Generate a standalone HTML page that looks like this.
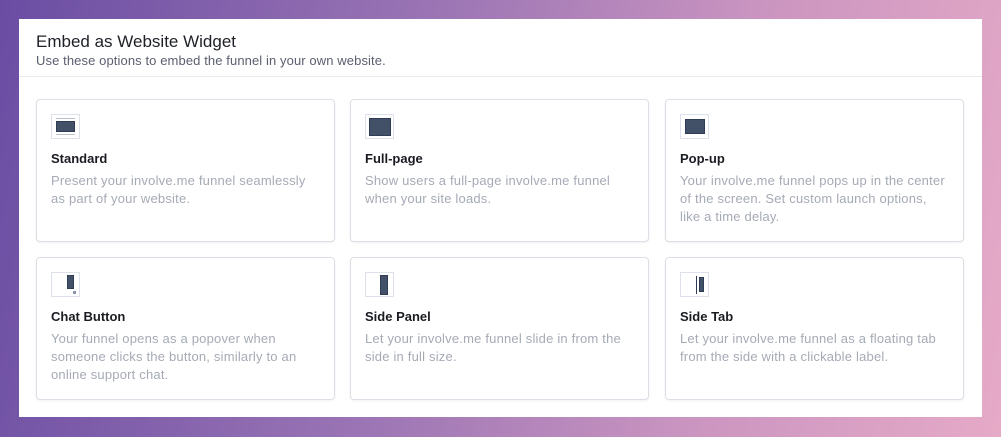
<!DOCTYPE html>
<html><head><meta charset="utf-8"><style>
*{box-sizing:border-box;margin:0;padding:0}
body{width:1001px;height:437px;overflow:hidden;background:linear-gradient(100deg,#6a4da3 0%,#9a74b4 40%,#c994c0 70%,#e6aac7 100%);font-family:"Liberation Sans",sans-serif;position:relative}
.panel{position:absolute;left:19px;top:19px;width:963px;height:398px;background:#fff}
.hd{height:58px;border-bottom:1px solid #e8eaee;padding:13px 0 0 17px}
.hd h1{font-size:17px;font-weight:normal;color:#1f2128;line-height:20px}
.hd p{font-size:13px;color:#5b6070;line-height:18px;letter-spacing:.1px}
.card{position:absolute;width:299px;height:143px;border:1px solid #dcdfe5;border-radius:4px;box-shadow:0 1px 2px rgba(0,0,0,.06);padding:14px 14px 0 14px}
.ic{width:29px;height:25px;border:1px solid #dde2ea;position:relative;margin-bottom:11px}
.ic i{position:absolute;background:#425068;border:1px solid #2e3c55}
.card h3{font-size:13px;font-weight:bold;color:#1a1c22;line-height:18px;margin-bottom:4px}
.card p{font-size:13px;color:#a5aab5;line-height:18px;letter-spacing:.2px}
</style></head><body>
<div class="panel">
<div class="hd"><h1>Embed as Website Widget</h1><p>Use these options to embed the funnel in your own website.</p></div>
</div>
<div class="card" style="left:36px;top:99px"><div class="ic"><i style="left:4px;top:6px;width:19px;height:11px"></i><b style="position:absolute;left:4px;top:3px;width:19px;height:1px;background:#b8c0cc"></b><b style="position:absolute;left:4px;top:19px;width:19px;height:1px;background:#b8c0cc"></b></div><h3>Standard</h3><p>Present your involve.me funnel seamlessly<br>as part of your website.</p></div>
<div class="card" style="left:350px;top:99px"><div class="ic"><i style="left:3px;top:3px;width:22px;height:18px"></i></div><h3>Full-page</h3><p>Show users a full-page involve.me funnel<br>when your site loads.</p></div>
<div class="card" style="left:665px;top:99px"><div class="ic"><i style="left:4px;top:4px;width:20px;height:15px"></i></div><h3>Pop-up</h3><p>Your involve.me funnel pops up in the center<br>of the screen. Set custom launch options,<br>like a time delay.</p></div>
<div class="card" style="left:36px;top:257px"><div class="ic"><i style="left:15px;top:2px;width:7px;height:14px"></i><b style="position:absolute;left:21px;top:18px;width:3px;height:3px;background:#8a95a8"></b></div><h3>Chat Button</h3><p>Your funnel opens as a popover when<br>someone clicks the button, similarly to an<br>online support chat.</p></div>
<div class="card" style="left:350px;top:257px"><div class="ic"><i style="left:14px;top:2px;width:8px;height:20px"></i></div><h3>Side Panel</h3><p>Let your involve.me funnel slide in from the<br>side in full size.</p></div>
<div class="card" style="left:665px;top:257px"><div class="ic"><b style="position:absolute;left:15px;top:3px;width:1px;height:18px;background:#2e3c55"></b><i style="left:18px;top:4px;width:5px;height:15px"></i></div><h3>Side Tab</h3><p>Let your involve.me funnel as a floating tab<br>from the side with a clickable label.</p></div>
</body></html>
